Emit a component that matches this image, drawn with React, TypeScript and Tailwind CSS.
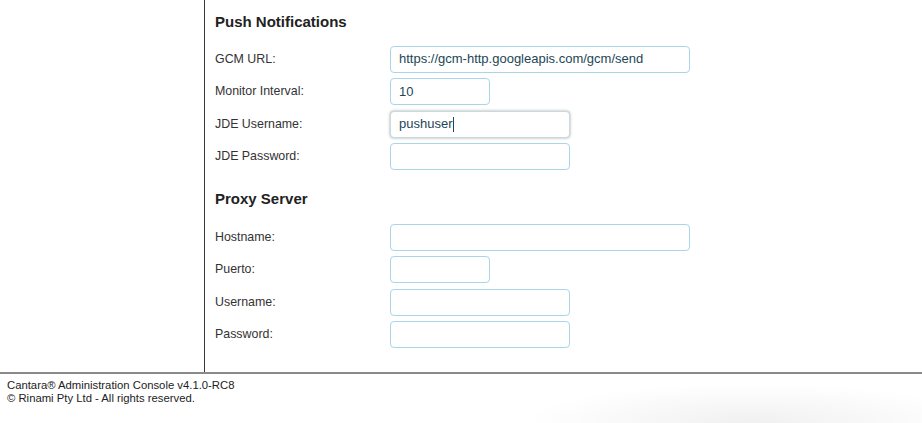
import React from "react";

const inputCls =
  "h-[27px] rounded-[4px] border border-[#a9d4ea] bg-white px-[8px] text-[13px] text-[#1d4656] outline-none";

function Row({ label, width, value, focus }: { label: string; width: string; value?: string; focus?: boolean }) {
  return (
    <div className="flex h-[27px] items-center">
      <div className="w-[175px] text-[12.4px] text-[#333]">{label}</div>
      <div
        className={`${inputCls} ${width} flex items-center ${focus ? "shadow-[0_0_3px_rgba(0,0,0,0.35)] border-[#c9d9e0]" : ""}`}
      >
        {value}
        {focus && <span className="ml-[1px] inline-block h-[15px] w-[1px] bg-[#1d4656]" />}
      </div>
    </div>
  );
}

export default function App() {
  return (
    <div className="h-[423px] w-[922px] overflow-hidden bg-white" style={{ fontFamily: '"Liberation Sans", Arial, sans-serif' }}>
      <div className="flex h-[372px]">
        <div className="w-[205px] shrink-0 border-r border-[#3a3a3a]" />
        <div className="flex-1 pl-[10px]">
          <h2 className="mt-[11px] text-[15px] font-bold text-[#222]">Push Notifications</h2>
          <div className="mt-[12px] flex flex-col gap-[5.5px]">
            <Row label="GCM URL:" width="w-[300px]" value="https://gcm-http.googleapis.com/gcm/send" />
            <Row label="Monitor Interval:" width="w-[100px]" value="10" />
            <Row label="JDE Username:" width="w-[180px]" value="pushuser" focus />
            <Row label="JDE Password:" width="w-[180px]" />
          </div>
          <h2 className="mt-[18px] text-[15px] font-bold text-[#222]">Proxy Server</h2>
          <div className="mt-[13px] flex flex-col gap-[5.5px]">
            <Row label="Hostname:" width="w-[300px]" />
            <Row label="Puerto:" width="w-[100px]" />
            <Row label="Username:" width="w-[180px]" />
            <Row label="Password:" width="w-[180px]" />
          </div>
        </div>
      </div>
      <div className="relative h-[51px] border-t-2 border-[#8a8a8a]">
        <div className="pointer-events-none absolute bottom-[-40px] right-[-60px] h-[80px] w-[460px] rounded-[50%] bg-[radial-gradient(ellipse_at_center,rgba(0,0,0,0.06),rgba(0,0,0,0)_70%)]" />
        <div className="relative px-[7px] pt-[5px] text-[11.3px] leading-[13px] text-[#222]">
          <div>Cantara® Administration Console v4.1.0-RC8</div>
          <div>© Rinami Pty Ltd - All rights reserved.</div>
        </div>
      </div>
    </div>
  );
}
